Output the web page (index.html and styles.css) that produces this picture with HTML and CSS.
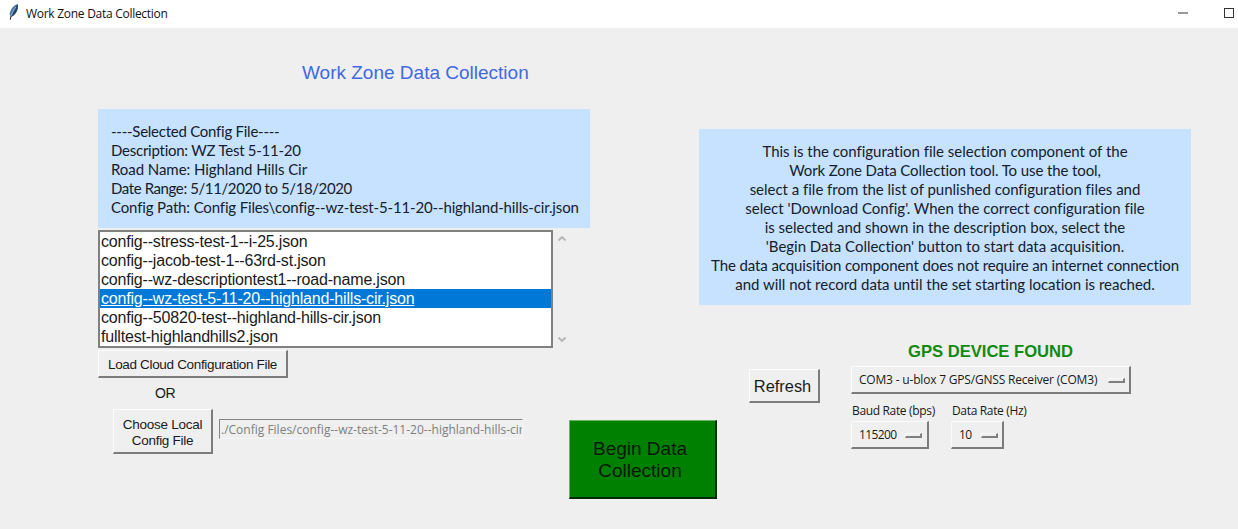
FILE: index.html
```html
<!DOCTYPE html>
<html lang="en">
<head>
<meta charset="utf-8">
<title>Work Zone Data Collection</title>
<link rel="stylesheet" href="styles.css">
</head>
<body>
<header class="titlebar">
  <svg class="feather" width="12" height="18" viewBox="0 0 12 18"><path d="M9.800 1C6 2 2.200 6 1.600 11.500L3.200 14C7.500 12 10.500 7 9.800 1Z" fill="#4a7aa8"/><path d="M9.700 1.200C7.500 4 4.500 8 3.200 13.800C7.500 12 11 6 9.700 1.200Z" fill="#24435f"/><path d="M8 4C6 6.500 4 10 3 13.500" fill="none" stroke="#a8c4da" stroke-width=".9"/><path d="M3.200 12.500L2.200 16.800" stroke="#222" stroke-width="1"/></svg>
  <span class="caption">Work Zone Data Collection</span>
  <span class="minimize"></span>
  <span class="maximize"></span>
</header>
<main>
  <div class="upper">
    <section class="files">
      <h1 class="heading">Work Zone Data Collection</h1>
      <div class="selected">
        <div class="tight">----Selected Config File----</div>
        <div class="tight">Description: WZ Test 5-11-20</div>
        <div>Road Name: Highland Hills Cir</div>
        <div class="dates">Date Range: 5/11/2020 to 5/18/2020</div>
        <div class="snug">Config Path: Config Files\config--wz-test-5-11-20--highland-hills-cir.json</div>
      </div>
      <div class="list-row">
        <ul class="list">
          <li>config--stress-test-1--i-25.json</li>
          <li>config--jacob-test-1--63rd-st.json</li>
          <li>config--wz-descriptiontest1--road-name.json</li>
          <li class="active"><span>config--wz-test-5-11-20--highland-hills-cir.json</span></li>
          <li>config--50820-test--highland-hills-cir.json</li>
          <li>fulltest-highlandhills2.json</li>
        </ul>
        <div class="scroll">
          <svg width="10" height="7" viewBox="0 0 10 7"><path d="M1.500 5.500L5 2L8.500 5.500" /></svg>
          <svg width="10" height="7" viewBox="0 0 10 7"><path d="M1.500 1.500L5 5L8.500 1.500" /></svg>
        </div>
      </div>
    </section>
    <section class="about">
      <div>This is the configuration file selection component of the</div>
      <div class="snug">Work Zone Data Collection tool. To use the tool,</div>
      <div>select a file from the list of punlished configuration files and</div>
      <div>select 'Download Config'. When the correct configuration file</div>
      <div>is selected and shown in the description box, select the</div>
      <div>'Begin Data Collection' button to start data acquisition.</div>
      <div class="snug">The data acquisition component does not require an internet connection</div>
      <div>and will not record data until the set starting location is reached.</div>
    </section>
  </div>
  <div class="lower">
    <section class="source">
      <button class="raised load">Load Cloud Configuration File</button>
      <div class="or">OR</div>
      <div class="local">
        <button class="raised choose">Choose Local<br>Config File</button>
        <div class="path">./Config Files/config--wz-test-5-11-20--highland-hills-cir.json</div>
      </div>
    </section>
    <button class="begin">Begin Data<br>Collection</button>
    <button class="raised refresh">Refresh</button>
    <section class="gps">
      <div class="status">GPS DEVICE FOUND</div>
      <div class="raised menu port"><span>COM3 - u-blox 7 GPS/GNSS Receiver (COM3)</span><i></i></div>
      <div class="rates">
        <div class="rate baud"><label>Baud Rate (bps)</label><div class="raised menu"><span>115200</span><i></i></div></div>
        <div class="rate hz"><label>Data Rate (Hz)</label><div class="raised menu"><span>10</span><i></i></div></div>
      </div>
    </section>
  </div>
</main>
</body>
</html>
```

FILE: styles.css
```css
* { box-sizing: border-box; }
body { margin: 0; width: 1238px; height: 529px; overflow: hidden; background: #efefef; color: #1a1a1a; font-family: "Liberation Sans", Arial, sans-serif; }
button { font-family: inherit; color: inherit; padding: 0; margin: 0; border-radius: 0; }
.titlebar { display: flex; height: 28px; padding-left: 8px; background: #fff; align-items: flex-start; }
.feather { margin-top: 3px; }
.caption { margin-left: 6px; width: 1152px; font: 12px/28px "Open Sans", sans-serif; letter-spacing: -0.28px; color: #111; }
.minimize { width: 10px; height: 2px; margin-top: 12px; background: #999; flex: none; }
.maximize { width: 10px; height: 10px; margin: 8px 0 0 36px; border: 1px solid #333; flex: none; }
.upper { display: flex; height: 320px; padding-left: 98px; }
.files { width: 492px; }
.heading { margin: 0; height: 81px; padding: 33px 0 0 204px; font-size: 19px; line-height: 24px; font-weight: 400; color: #4169e1; white-space: nowrap; }
.selected { height: 119px; padding: 13px 12px 0 13px; background: #c6e2ff; }
.selected, .about { font: 15px/19px Lato, sans-serif; letter-spacing: -0.06px; font-variant-ligatures: none; white-space: nowrap; color: #14202c; }
.snug { letter-spacing: -0.15px; }
.tight { letter-spacing: -0.25px; }
.dates { letter-spacing: -0.4px; }
.list-row { display: flex; height: 120px; }
.list { width: 455px; margin: 2px 0 0; padding: 0; list-style: none; border: 2px solid #808080; background: #fff; font-size: 16px; line-height: 20px; letter-spacing: -0.19px; white-space: nowrap; overflow: hidden; }
.list li { height: 19px; padding-left: 1px; }
.active { background: #0078d7; color: #fff; }
.active span { text-decoration: underline; }
.scroll { display: flex; flex-direction: column; justify-content: space-between; padding: 7px 0 5px 4px; }
.scroll path { fill: none; stroke: #b5b5b5; stroke-width: 1.800; }
.about { width: 492px; height: 176px; margin: 101px 0 0 109px; padding-top: 13px; text-align: center; background: #c6e2ff; letter-spacing: -0.015px; }
.about .snug { letter-spacing: -0.1px; }
.lower { display: flex; align-items: flex-start; padding-left: 98px; }
.source { width: 471px; padding-top: 2px; }
.raised { display: block; background: #efefef; border: solid; border-width: 1px 2px 2px 1px; border-color: #fbfbfb #7c7c7c #7c7c7c #fbfbfb; }
.load { width: 190px; height: 28px; font-size: 13.5px; letter-spacing: -0.33px; padding-top: 1px; }
.or { width: 134px; height: 31px; padding-top: 6px; text-align: center; font-size: 14px; line-height: 18px; letter-spacing: -0.6px; }
.local { display: flex; padding-left: 15px; }
.choose { width: 100px; height: 45px; padding-top: 3px; font-size: 13.5px; line-height: 16px; letter-spacing: -0.26px; }
.path { width: 304px; height: 20px; margin: 10px 0 0 6px; padding-left: 1px; overflow: hidden; border: 1px solid #858585; border-color: #858585 #f5f5f5 #f5f5f5 #858585; font: 12px/20px "Open Sans", sans-serif; color: #808080; white-space: nowrap; }
.begin { width: 148px; height: 79px; padding: 2px 5px 0 0; margin-top: 72px; background: #008000; border: solid; border-width: 1px 2px 2px 1px; border-color: #6ab56a #002800 #002800 #6ab56a; font-size: 19px; line-height: 22px; color: #061806; }
.refresh { width: 71px; height: 34px; padding: 1px 3px 0 0; margin: 21px 0 0 32px; font-size: 16.4px; }
.gps { width: 280px; margin-left: 31px; }
.status { height: 18px; margin-top: -5px; padding-left: 57px; font-size: 16.6px; line-height: 18px; font-weight: 700; color: #118a11; white-space: nowrap; }
.menu { display: flex; align-items: center; justify-content: space-between; height: 28px; padding: 1px 4px 0 7px; font: 12px/18px "Open Sans", sans-serif; letter-spacing: -0.19px; white-space: nowrap; }
.menu i { width: 17px; height: 5px; border: solid; border-width: 1px 2px 2px 1px; border-color: #f8f8f8 #808080 #808080 #f8f8f8; }
.port { margin-top: 5px; }
.rates { display: flex; margin-top: 8px; }
.rate { width: 100px; }
.rate label { display: block; height: 19px; padding-left: 1px; font: 12px/18px "Open Sans", sans-serif; letter-spacing: -0.34px; white-space: nowrap; }
.rate .menu { letter-spacing: -0.6px; }
.baud .menu { width: 78px; padding-right: 5px; }
.hz .menu { width: 53px; }
```
